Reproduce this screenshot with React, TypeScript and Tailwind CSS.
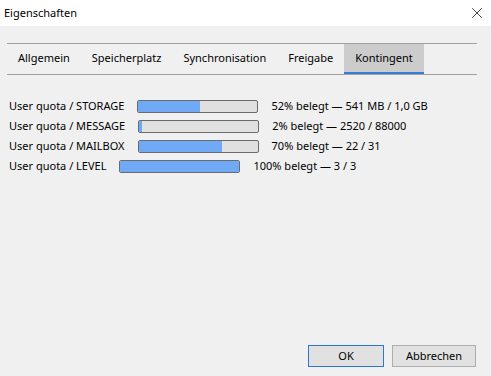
import { X } from "lucide-react"

interface Quota {
  name: string
  percent: number
  detail: string
}

const QUOTAS: Quota[] = [
  { name: "STORAGE", percent: 52, detail: "541 MB / 1,0 GB" },
  { name: "MESSAGE", percent: 2, detail: "2520 / 88000" },
  { name: "MAILBOX", percent: 70, detail: "22 / 31" },
  { name: "LEVEL", percent: 100, detail: "3 / 3" },
]

const TABS = ["Allgemein", "Speicherplatz", "Synchronisation", "Freigabe", "Kontingent"]

export default function App() {
  return (
    <div
      className="flex h-[376px] w-[491px] flex-col bg-[#f0f0f0] text-[11px] text-black"
      style={{ fontFamily: '"Noto Sans", "Liberation Sans", sans-serif' }}
    >
      {/* title bar */}
      <div className="flex h-[26px] shrink-0 items-center justify-between bg-white pl-[4px] pr-[5px]">
        <span>Eigenschaften</span>
        <X className="h-[18px] w-[18px] text-[#222]" strokeWidth={1.1} />
      </div>

      <div className="flex flex-1 flex-col pl-[7px] pr-[14px]">
        {/* tabs */}
        <div className="mt-[17px] flex h-[32px] border-y border-[#a0a0a0]">
          {TABS.map((tab) => {
            const active = tab === "Kontingent"
            return (
              <div
                key={tab}
                className={
                  active
                    ? "flex items-center border-b-2 border-[#3a7bd5] bg-[#cccccc] px-[11px] pt-[1px]"
                    : "flex items-center px-[11px] pb-[1px]"
                }
              >
                {tab}
              </div>
            )
          })}
        </div>

        {/* quota rows */}
        <div className="mt-[21px] flex flex-col pl-[2px]">
          {QUOTAS.map((q) => (
            <div key={q.name} className="flex h-[20px] items-center gap-[13px]">
              <span>User quota / {q.name}</span>
              <div className="h-[13px] w-[121px] overflow-hidden rounded-[2px] border border-[#6b6b6b] bg-[#e0e0e0]">
                <div className="h-full bg-[#70aaf6]" style={{ width: `${q.percent}%` }} />
              </div>
              <span>
                {q.percent}% belegt — {q.detail}
              </span>
            </div>
          ))}
        </div>

        {/* buttons */}
        <div className="mt-auto mb-[9px] flex justify-end gap-[8px] pr-[1px]">
          <button
            type="button"
            className="h-[22px] w-[76px] border border-[#2a76d2] bg-[#e1e1e1]"
          >
            OK
          </button>
          <button
            type="button"
            className="h-[22px] w-[84px] border border-[#adadad] bg-[#e1e1e1]"
          >
            Abbrechen
          </button>
        </div>
      </div>
    </div>
  )
}
